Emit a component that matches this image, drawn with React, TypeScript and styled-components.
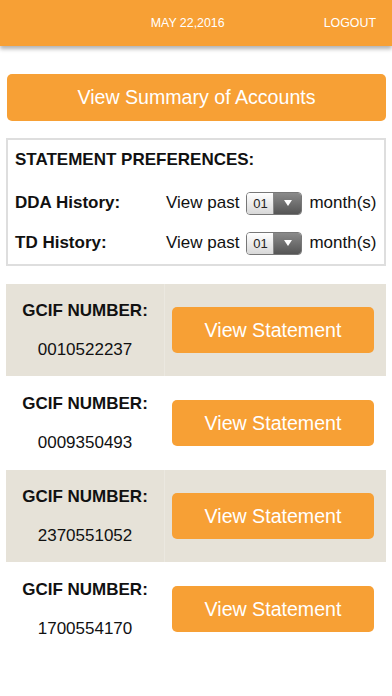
import React from 'react';
import styled, { createGlobalStyle } from 'styled-components';

const GlobalStyle = createGlobalStyle`
  html, body {
    margin: 0;
    padding: 0;
    background: #ffffff;
    font-family: "Liberation Sans", Arial, sans-serif;
  }
`;

const ORANGE = '#f7a035';

const Page = styled.div`
  width: 392px;
  min-height: 696px;
  background: #ffffff;
`;

const Header = styled.div`
  height: 46px;
  background: ${ORANGE};
  box-shadow: 0 3px 4px rgba(0, 0, 0, 0.3);
  display: flex;
  align-items: center;
  justify-content: flex-end;
  padding-right: 16px;
  color: #ffffff;
  font-size: 12.4px;
`;

const HeaderDate = styled.span`
  margin-right: 99px;
`;

const Content = styled.div`
  padding: 28px 6px 0 6px;
`;

const SummaryButton = styled.button`
  display: block;
  width: 379px;
  height: 47px;
  margin-left: 1px;
  border: none;
  border-radius: 5px;
  background: ${ORANGE};
  color: #ffffff;
  font-family: "Liberation Sans", Arial, sans-serif;
  font-size: 19.6px;
`;

const PrefBox = styled.div`
  margin-top: 17px;
  border: 2px solid #dedede;
  padding: 10px 0 0 7px;
  height: 128px;
  box-sizing: border-box;
`;

const PrefTitle = styled.div`
  font-weight: bold;
  font-size: 17px;
  line-height: 20px;
  color: #111;
`;

const PrefRow = styled.div<{ $gap: number }>`
  display: flex;
  align-items: center;
  margin-top: ${p => p.$gap}px;
  height: 24px;
  font-size: 17px;
  color: #111;
`;

const PrefLabel = styled.span`
  font-weight: bold;
  width: 151px;
`;

const Select = styled.div`
  display: flex;
  width: 56px;
  height: 23px;
  margin: 0 7px;
  border: 1px solid #777;
  border-radius: 4px;
  overflow: hidden;
  box-sizing: border-box;
`;

const SelectValue = styled.div`
  width: 26px;
  background: linear-gradient(#ffffff, #d8d8d8);
  border-right: 1px solid #888;
  font-size: 13px;
  display: flex;
  align-items: center;
  justify-content: center;
  color: #222;
`;

const SelectArrow = styled.div`
  flex: 1;
  background: linear-gradient(#8a8a8a, #555555);
  display: flex;
  align-items: center;
  justify-content: center;
`;

const Rows = styled.div`
  margin-top: 18px;
`;

const Row = styled.div<{ $shaded: boolean }>`
  display: flex;
  height: 92px;
  background: ${p => (p.$shaded ? '#e6e2d8' : '#ffffff')};
  margin-bottom: 1px;
`;

const GcifCol = styled.div<{ $shaded: boolean }>`
  width: 159px;
  border-right: 1px solid ${p => (p.$shaded ? '#ebe8e0' : '#ffffff')};
  display: flex;
  flex-direction: column;
  align-items: center;
  padding-top: 17px;
  box-sizing: border-box;
  color: #111;
  font-size: 17px;
  line-height: 20px;
`;

const GcifLabel = styled.div`
  font-weight: bold;
`;

const GcifNumber = styled.div`
  margin-top: 19px;
`;

const ButtonCol = styled.div`
  flex: 1;
  display: flex;
  align-items: center;
  padding-left: 7px;
`;

const StatementButton = styled.button`
  width: 202px;
  height: 46px;
  border: none;
  border-radius: 5px;
  background: ${ORANGE};
  color: #ffffff;
  font-family: "Liberation Sans", Arial, sans-serif;
  font-size: 19.6px;
`;

const accounts = ['0010522237', '0009350493', '2370551052', '1700554170'];

const MonthSelect = () => (
  <Select>
    <SelectValue>01</SelectValue>
    <SelectArrow>
      <svg width="10" height="8" viewBox="0 0 10 8">
        <path d="M1 1 L9 1 L5 7 Z" fill="#ffffff" />
      </svg>
    </SelectArrow>
  </Select>
);

export default function App() {
  return (
    <Page>
      <GlobalStyle />
      <Header>
        <HeaderDate>MAY 22,2016</HeaderDate>
        <span>LOGOUT</span>
      </Header>
      <Content>
        <SummaryButton>View Summary of Accounts</SummaryButton>
        <PrefBox>
          <PrefTitle>STATEMENT PREFERENCES:</PrefTitle>
          <PrefRow $gap={21}>
            <PrefLabel>DDA History:</PrefLabel>
            <span>View past</span>
            <MonthSelect />
            <span>month(s)</span>
          </PrefRow>
          <PrefRow $gap={16}>
            <PrefLabel>TD History:</PrefLabel>
            <span>View past</span>
            <MonthSelect />
            <span>month(s)</span>
          </PrefRow>
        </PrefBox>
        <Rows>
          {accounts.map((num, i) => (
            <Row key={num} $shaded={i % 2 === 0}>
              <GcifCol $shaded={i % 2 === 0}>
                <GcifLabel>GCIF NUMBER:</GcifLabel>
                <GcifNumber>{num}</GcifNumber>
              </GcifCol>
              <ButtonCol>
                <StatementButton>View Statement</StatementButton>
              </ButtonCol>
            </Row>
          ))}
        </Rows>
      </Content>
    </Page>
  );
}
